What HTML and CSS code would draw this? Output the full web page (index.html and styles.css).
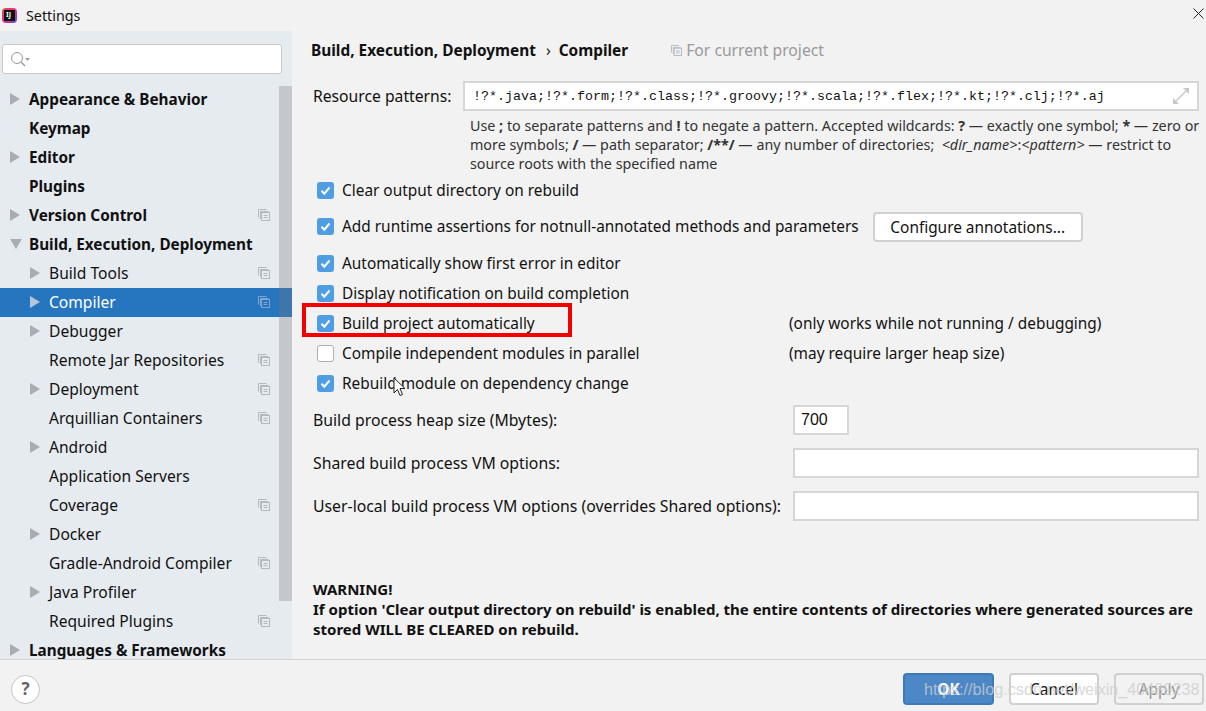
FILE: index.html
```html
<!DOCTYPE html>
<html lang="en">
<head>
  <meta charset="UTF-8" />
  <title>Settings</title>
  <link rel="stylesheet" href="styles.css">
</head>
<body>
  <svg class="defs" width="0" height="0">
    <symbol id="copy" viewBox="0 0 12 12">
      <path d="M.5 8.500V.5h8" fill="none" stroke="currentColor"/>
      <path d="M2.500 10V2.500h8" fill="none" stroke="currentColor"/>
      <rect x="3.500" y="3.500" width="8" height="8" fill="none" stroke="currentColor"/>
      <path d="M5.500 6.500h4M5.500 8.500h4" stroke="currentColor"/>
    </symbol>
    <symbol id="right" viewBox="0 0 10 12"><path d="M0 0l10 6-10 6z" fill="currentColor"/></symbol>
    <symbol id="down" viewBox="0 0 12 10"><path d="M0 0h12L6 10z" fill="currentColor"/></symbol>
    <symbol id="tick" viewBox="0 0 17 17">
      <path d="M4.500 8.800l2.800 2.900 5.200-6.200" fill="none" stroke="#fff" stroke-width="2"/>
    </symbol>
  </svg>

  <div class="titlebar">
    <div class="logo"><span class="logo-mark">IJ</span></div>
    <span class="title">Settings</span>
    <svg class="close" width="11" height="11" viewBox="0 0 11 11"><path d="M.5.500l10 10M10.500.500l-10 10" stroke="#222" fill="none"/></svg>
  </div>

  <div class="content">
    <aside class="sidebar">
      <div class="search">
        <svg width="22" height="18" viewBox="0 0 22 18">
          <circle cx="7" cy="8" r="5.500" fill="none" stroke="#999"/>
          <path d="M11 12l4 4" stroke="#999" stroke-width="1.500"/>
          <path d="M15 8h5l-2.500 3z" fill="#999"/>
        </svg>
      </div>
      <div class="tree">
        <div class="row top"><svg class="arrow"><use href="#right"/></svg><span>Appearance &amp; Behavior</span></div>
        <div class="row top"><span class="no-arrow"></span><span>Keymap</span></div>
        <div class="row top"><svg class="arrow"><use href="#right"/></svg><span>Editor</span></div>
        <div class="row top"><span class="no-arrow"></span><span>Plugins</span></div>
        <div class="row top"><svg class="arrow"><use href="#right"/></svg><span>Version Control</span><svg class="copy"><use href="#copy"/></svg></div>
        <div class="row top"><svg class="arrow open"><use href="#down"/></svg><span>Build, Execution, Deployment</span></div>
        <div class="row sub"><svg class="arrow"><use href="#right"/></svg><span>Build Tools</span><svg class="copy"><use href="#copy"/></svg></div>
        <div class="row sub selected"><svg class="arrow"><use href="#right"/></svg><span>Compiler</span><svg class="copy"><use href="#copy"/></svg></div>
        <div class="row sub"><svg class="arrow"><use href="#right"/></svg><span>Debugger</span></div>
        <div class="row sub"><span class="no-arrow"></span><span>Remote Jar Repositories</span><svg class="copy"><use href="#copy"/></svg></div>
        <div class="row sub"><svg class="arrow"><use href="#right"/></svg><span>Deployment</span><svg class="copy"><use href="#copy"/></svg></div>
        <div class="row sub"><span class="no-arrow"></span><span>Arquillian Containers</span><svg class="copy"><use href="#copy"/></svg></div>
        <div class="row sub"><svg class="arrow"><use href="#right"/></svg><span>Android</span></div>
        <div class="row sub"><span class="no-arrow"></span><span>Application Servers</span></div>
        <div class="row sub"><span class="no-arrow"></span><span>Coverage</span><svg class="copy"><use href="#copy"/></svg></div>
        <div class="row sub"><svg class="arrow"><use href="#right"/></svg><span>Docker</span></div>
        <div class="row sub"><span class="no-arrow"></span><span>Gradle-Android Compiler</span><svg class="copy"><use href="#copy"/></svg></div>
        <div class="row sub"><svg class="arrow"><use href="#right"/></svg><span>Java Profiler</span></div>
        <div class="row sub"><span class="no-arrow"></span><span>Required Plugins</span><svg class="copy"><use href="#copy"/></svg></div>
        <div class="row top"><svg class="arrow"><use href="#right"/></svg><span>Languages &amp; Frameworks</span></div>
      </div>
      <div class="scrollbar"></div>
    </aside>

    <main class="main">
      <div class="crumbs">
        <b>Build, Execution, Deployment</b>
        <span class="crumb-sep">›</span>
        <b>Compiler</b>
        <span class="scope"><svg class="copy"><use href="#copy"/></svg>For current project</span>
      </div>

      <div class="patterns">
        <label class="patterns-label">Resource patterns:</label>
        <div class="field patterns-field">
          <span class="mono">!?*.java;!?*.form;!?*.class;!?*.groovy;!?*.scala;!?*.flex;!?*.kt;!?*.clj;!?*.aj</span>
          <svg width="16" height="16" viewBox="0 0 16 16">
            <path d="M10 0h6v6zM0 16v-6l6 6z" fill="#c4c8cc"/>
            <path d="M13 3L3 13" stroke="#c4c8cc" stroke-width="1.500"/>
          </svg>
        </div>
      </div>
      <p class="hint">Use <b>;</b> to separate patterns and <b>!</b> to negate a pattern. Accepted wildcards: <b>?</b> — exactly one symbol; <b>*</b> — zero or<br>more symbols; <b>/</b> — path separator; <b>/**/</b> — any number of directories; &nbsp;<i>&lt;dir_name&gt;</i>:<i>&lt;pattern&gt;</i> — restrict to<br>source roots with the specified name</p>

      <div class="check-row first"><span class="box"><svg><use href="#tick"/></svg></span>Clear output directory on rebuild</div>
      <div class="check-row second"><span class="box"><svg><use href="#tick"/></svg></span>Add runtime assertions for notnull-annotated methods and parameters<button class="btn configure">Configure annotations...</button></div>
      <div class="check-row third"><span class="box"><svg><use href="#tick"/></svg></span>Automatically show first error in editor</div>
      <div class="check-row"><span class="box"><svg><use href="#tick"/></svg></span>Display notification on build completion</div>
      <div class="check-row"><span class="box"><svg><use href="#tick"/></svg></span><span class="check-label">Build project automatically</span><span class="note">(only works while not running / debugging)</span></div>
      <div class="check-row"><span class="box off"></span><span class="check-label">Compile independent modules in parallel</span><span class="note">(may require larger heap size)</span></div>
      <div class="check-row"><span class="box"><svg><use href="#tick"/></svg></span>Rebuild module on dependency change</div>

      <div class="form-row heap"><label>Build process heap size (Mbytes):</label><div class="field small">700</div></div>
      <div class="form-row"><label>Shared build process VM options:</label><div class="field wide"></div></div>
      <div class="form-row"><label>User-local build process VM options (overrides Shared options):</label><div class="field wide"></div></div>

      <p class="warning">WARNING!<br>If option 'Clear output directory on rebuild' is enabled, the entire contents of directories where generated sources are stored WILL BE CLEARED on rebuild.</p>

      <div class="red-mark"></div>
      <svg class="pointer" width="13" height="21" viewBox="0 0 13 21">
        <path d="M1 1v15l3.500-3.500 2.500 6 2.500-1-2.500-6h5z" fill="#fff" stroke="#222"/>
      </svg>
    </main>
  </div>

  <footer class="footer">
    <div class="help">?</div>
    <div class="buttons">
      <button class="btn primary">OK</button>
      <button class="btn">Cancel</button>
      <button class="btn disabled">Apply</button>
    </div>
    <span class="watermark">https://blog.csdn.net/weixin_40489238</span>
  </footer>
</body>
</html>
```

FILE: styles.css
```css
* {
  box-sizing: border-box;
}

body {
  margin: 0;
  width: 1206px;
  height: 711px;
  overflow: hidden;
  display: flex;
  flex-direction: column;
  background: #f2f2f2;
  color: #111;
  font-family: "Noto Sans", sans-serif;
  font-size: 15.4px;
}

.defs {
  position: absolute;
}

.titlebar {
  height: 31px;
  flex: none;
  display: flex;
  align-items: center;
  padding-left: 2px;
}

.logo {
  width: 15px;
  height: 15px;
  border-radius: 4px;
  display: flex;
  align-items: center;
  justify-content: center;
  background: linear-gradient(135deg, #f0503c 0%, #e8308c 50%, #4a52d8 100%);
}

.logo-mark {
  width: 11px;
  height: 11px;
  background: #111;
  color: #fff;
  font-size: 7px;
  font-weight: 700;
  line-height: 9px;
  padding-left: 2px;
}

.title {
  margin-left: 9px;
  font-size: 14.3px;
}

.close {
  margin-left: auto;
  margin-right: 2px;
  margin-top: -5px;
}

.content {
  height: 628px;
  flex: none;
  display: flex;
}

.sidebar {
  width: 292px;
  flex: none;
  position: relative;
  overflow: hidden;
  background: #e6ebf0;
}

.search {
  width: 280px;
  height: 30px;
  margin: 13px 0 11px 2px;
  padding: 5px 0 0 7px;
  background: #fff;
  border: 1px solid #c9c9c9;
  border-radius: 3px;
}

.row {
  height: 29px;
  display: flex;
  align-items: center;
  white-space: nowrap;
  padding: 0 22px 2px 0;
}

.row.top {
  padding-left: 10px;
  font-weight: 700;
  font-size: 15.3px;
}

.row.sub {
  padding-left: 30px;
  font-size: 15.6px;
}

.row.selected {
  background: #2675bf;
  color: #fff;
}

.arrow {
  width: 10px;
  height: 12px;
  margin-right: 9px;
  color: #a9adb2;
  flex: none;
}

.arrow.open {
  width: 12px;
  height: 10px;
  margin-right: 7px;
}

.selected .arrow {
  color: #b4c6da;
}

.no-arrow {
  width: 19px;
  flex: none;
}

.copy {
  width: 12px;
  height: 12px;
  margin-left: auto;
  color: #b4b9be;
  flex: none;
}

.selected .copy {
  color: #7fa6cf;
}

.scrollbar {
  position: absolute;
  left: 279px;
  top: 55px;
  width: 13px;
  height: 515px;
  background: rgba(120, 120, 125, 0.3);
}

.main {
  flex: 1;
  position: relative;
  padding: 0 7px 0 21px;
}

.crumbs {
  height: 38px;
  margin-left: -2px;
  display: flex;
  align-items: center;
}

.crumb-sep {
  margin: 0 8px 0 10px;
}

.scope {
  display: flex;
  align-items: center;
  margin-left: 43px;
  color: #9a9a9a;
  font-size: 15.7px;
}

.scope .copy {
  width: 11px;
  height: 11px;
  margin: 0 4px 0 0;
}

.patterns {
  display: flex;
  align-items: center;
  margin-top: 12px;
}

.patterns-label {
  width: 150px;
  flex: none;
  font-size: 15.7px;
}

.field {
  height: 30px;
  background: #fff;
  border: 2px solid #d6d6d6;
  display: flex;
  align-items: center;
}

.patterns-field {
  flex: 1;
  justify-content: space-between;
  padding: 0 8px;
}

.mono {
  font-family: "Liberation Mono", monospace;
  font-size: 13.33px;
}

.hint {
  margin: 5px 0 0 157px;
  color: #333;
  font-size: 14.3px;
  line-height: 19px;
  white-space: nowrap;
}

.check-row {
  height: 30px;
  display: flex;
  align-items: center;
  padding-left: 4px;
  white-space: nowrap;
}

.check-row.first {
  margin-top: 2px;
}

.check-row.second {
  margin-top: 7px;
  padding-bottom: 2px;
}

.check-row.third {
  margin-top: 6px;
}

.box {
  width: 17px;
  height: 17px;
  margin-right: 8px;
  flex: none;
  border-radius: 3px;
  background: #4f9ee3;
}

.box svg {
  display: block;
  width: 17px;
  height: 17px;
}

.box.off {
  background: #fff;
  border: 1px solid #b0b0b0;
}

.check-label {
  width: 447px;
  flex: none;
}

.btn {
  width: 90px;
  height: 32px;
  background: #fff;
  border: 2px solid #d0d0d0;
  border-radius: 4px;
  color: #111;
  font-family: inherit;
  font-size: 15.4px;
  padding: 0;
}

.configure {
  width: 210px;
  height: 30px;
  margin: 0 0 -2px 14px;
}

.form-row {
  display: flex;
  align-items: center;
  margin-top: 13px;
  font-size: 15.8px;
}

.form-row.heap {
  margin-top: 7px;
}

.form-row label {
  width: 480px;
  flex: none;
  white-space: nowrap;
}

.field.small {
  width: 56px;
  padding-left: 6px;
  font-family: "Liberation Sans", sans-serif;
  font-size: 16px;
}

.field.wide {
  flex: 1;
}

.warning {
  margin: 58px 0 0;
  font-weight: 700;
  font-size: 15px;
  line-height: 20px;
  color: #111;
}

.red-mark {
  position: absolute;
  left: 10px;
  top: 272px;
  width: 270px;
  height: 34px;
  border: 4px solid #f50000;
}

.pointer {
  position: absolute;
  left: 101px;
  top: 346px;
}

.footer {
  position: relative;
  flex: 1;
  display: flex;
  align-items: center;
  justify-content: space-between;
  border-top: 1px solid #d4d4d4;
  padding: 7px 2px 0 11px;
}

.help {
  width: 29px;
  height: 29px;
  border-radius: 50%;
  background: #fff;
  border: 1px solid #c4c4c4;
  color: #666;
  font-weight: 700;
  font-size: 17px;
  text-align: center;
  line-height: 26px;
}

.buttons {
  display: flex;
  gap: 15px;
}

.btn.primary {
  width: 91px;
  background: #4c87c7;
  border-color: #3f79b8;
  color: #fff;
  font-weight: 700;
}

.btn.disabled {
  background: #f2f2f2;
  color: #8f8f8f;
}

.watermark {
  position: absolute;
  left: 924px;
  top: 20px;
  font-family: "Liberation Sans", sans-serif;
  font-size: 16.2px;
  color: rgba(205, 205, 205, 0.8);
  white-space: nowrap;
}
```
